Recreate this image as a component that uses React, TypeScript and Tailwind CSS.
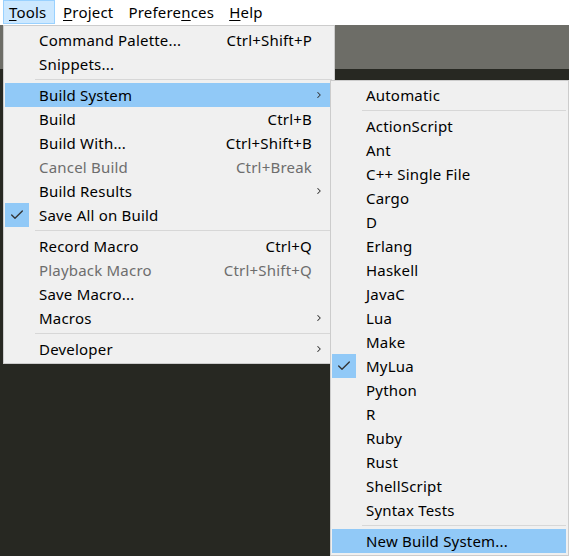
import { Check, ChevronRight } from "lucide-react";

type Item =
  | { sep: true }
  | {
      sep?: false;
      label: string;
      shortcut?: string;
      sub?: boolean;
      disabled?: boolean;
      checked?: boolean;
      active?: boolean;
    };

const toolsMenu: Item[] = [
  { label: "Command Palette...", shortcut: "Ctrl+Shift+P" },
  { label: "Snippets..." },
  { sep: true },
  { label: "Build System", sub: true, active: true },
  { label: "Build", shortcut: "Ctrl+B" },
  { label: "Build With...", shortcut: "Ctrl+Shift+B" },
  { label: "Cancel Build", shortcut: "Ctrl+Break", disabled: true },
  { label: "Build Results", sub: true },
  { label: "Save All on Build", checked: true },
  { sep: true },
  { label: "Record Macro", shortcut: "Ctrl+Q" },
  { label: "Playback Macro", shortcut: "Ctrl+Shift+Q", disabled: true },
  { label: "Save Macro..." },
  { label: "Macros", sub: true },
  { sep: true },
  { label: "Developer", sub: true },
];

const buildSystems: Item[] = [
  { label: "Automatic" },
  { sep: true },
  ...[
    "ActionScript",
    "Ant",
    "C++ Single File",
    "Cargo",
    "D",
    "Erlang",
    "Haskell",
    "JavaC",
    "Lua",
    "Make",
  ].map((label) => ({ label })),
  { label: "MyLua", checked: true },
  ...["Python", "R", "Ruby", "Rust", "ShellScript", "Syntax Tests"].map((label) => ({ label })),
  { sep: true },
  { label: "New Build System...", active: true },
];

function MenuList({ items }: { items: Item[] }) {
  return (
    <div className="flex flex-col">
      {items.map((item, i) => {
        if (item.sep) {
          return (
            <div key={i} className="flex h-[7px] items-center pl-[31px] pr-[2px]">
              <div className="h-px flex-1 bg-[#d7d7d7]" />
            </div>
          );
        }
        return (
          <div
            key={i}
            className={`relative ml-[1px] mr-[2px] flex h-6 items-center pl-[34px] pr-5 ${
              item.active ? "bg-[#91c9f7]" : ""
            } ${item.disabled ? "text-[#6d6d6d]" : "text-black"}`}
          >
            {item.checked && (
              <span className="absolute left-0 top-0 flex h-6 w-6 items-center justify-center bg-[#91c9f7]">
                <Check className="h-4 w-4 text-[#333]" strokeWidth={2} />
              </span>
            )}
            <span className="flex-1 whitespace-nowrap">{item.label}</span>
            {item.shortcut && <span className="whitespace-nowrap">{item.shortcut}</span>}
            {item.sub && (
              <ChevronRight className="absolute right-[8px] top-[7px] h-[10px] w-[10px] text-[#333]" strokeWidth={2.5} />
            )}
          </div>
        );
      })}
    </div>
  );
}

export default function App() {
  return (
    <div
      className="relative h-[556px] w-[569px] overflow-hidden bg-[#272822] text-[15px] leading-none tracking-[0.2px]"
      style={{ fontFamily: '"Noto Sans", "Open Sans", sans-serif' }}
    >
      {/* Menu bar */}
      <div className="flex h-[25px] items-stretch bg-white pl-[3px] text-black">
        <div className="flex h-6 w-[52px] items-center border border-[#99d1ff] bg-[#cce8ff] pl-[5px]">
          <span>
            <span className="underline underline-offset-2">T</span>ools
          </span>
        </div>
        <div className="flex h-6 items-center pl-[8px]">
          <span className="underline underline-offset-2">P</span>roject
        </div>
        <div className="flex h-6 items-center pl-[15px]">
          Prefere<span className="underline underline-offset-2">n</span>ces
        </div>
        <div className="flex h-6 items-center pl-[15px]">
          <span className="underline underline-offset-2">H</span>elp
        </div>
      </div>

      {/* Tab strip behind the menus */}
      <div className="h-[44px] bg-[#6d6d67]" />

      {/* Tools menu */}
      <div className="absolute left-[3px] top-[25px] w-[332px] border border-[#cccccc] bg-[#f0f0f0] py-[2px]">
        <MenuList items={toolsMenu} />
      </div>

      {/* Build System submenu */}
      <div className="absolute left-[330px] top-[80px] w-[239px] border border-[#cccccc] bg-[#f0f0f0] py-[2px]">
        <MenuList items={buildSystems} />
      </div>
    </div>
  );
}
